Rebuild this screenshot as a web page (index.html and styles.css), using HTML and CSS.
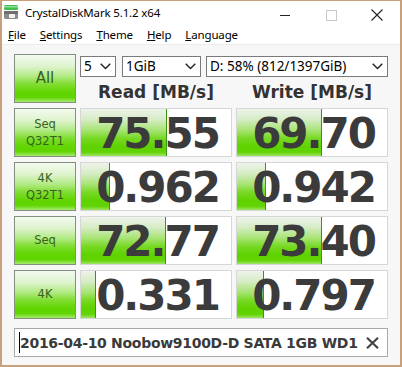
FILE: index.html
```html
<!DOCTYPE html>
<html>
	<head>
		<title>CrystalDiskMark 5.1.2 x64</title>
		<link rel="stylesheet" href="styles.css">
	</head>
	<body>
	<div class="window">
		<div class="titlebar">
			<svg class="appicon" width="16" height="15" viewBox="0 0 16 15">
				<rect x="0" y="0" width="14" height="5" rx="1.5" fill="#3fbf4a"/>
				<rect x="0" y="1" width="14" height="1.5" fill="#8fe09a"/>
				<rect x="0" y="6" width="14" height="8" rx="1.5" fill="#8c8c8c"/>
				<rect x="0" y="6" width="14" height="3" fill="#6f6f6f"/>
				<rect x="5" y="9" width="6" height="4" rx="1" fill="#f2f2f2"/>
			</svg>
			<span class="title">CrystalDiskMark 5.1.2 x64</span>
			<div class="caption">
				<span class="cbtn"><svg width="10" height="10" viewBox="0 0 10 10"><line x1="0" y1="5.5" x2="10" y2="5.5" stroke="#222" stroke-width="1"/></svg></span>
				<span class="cbtn"><svg width="11" height="11" viewBox="0 0 11 11"><rect x="0.5" y="0.5" width="10" height="10" fill="none" stroke="#c8c8c8" stroke-width="1"/></svg></span>
				<span class="cbtn"><svg width="12" height="12" viewBox="0 0 12 12"><path d="M0.5 0.5 L11.5 11.5 M11.5 0.5 L0.5 11.5" stroke="#222" stroke-width="1.1"/></svg></span>
			</div>
		</div>
		<div class="menubar">
			<span><u>F</u>ile</span>
			<span><u>S</u>ettings</span>
			<span><u>T</u>heme</span>
			<span><u>H</u>elp</span>
			<span><u>L</u>anguage</span>
		</div>
		<div class="content">
			<div class="board">
				<div class="btn all">All</div>
				<div class="top">
					<div class="selects">
						<div class="combo c-count"><span>5</span><svg class="chev" width="11" height="7" viewBox="0 0 11 7"><polyline points="0.7,0.7 5.5,5.6 10.3,0.7" fill="none" stroke="#222" stroke-width="1.4"/></svg></div>
						<div class="combo c-size"><span>1GiB</span><svg class="chev" width="11" height="7" viewBox="0 0 11 7"><polyline points="0.7,0.7 5.5,5.6 10.3,0.7" fill="none" stroke="#222" stroke-width="1.4"/></svg></div>
						<div class="combo c-drive"><span>D: 58% (812/1397GiB)</span><svg class="chev" width="11" height="7" viewBox="0 0 11 7"><polyline points="0.7,0.7 5.5,5.6 10.3,0.7" fill="none" stroke="#222" stroke-width="1.4"/></svg></div>
					</div>
					<div class="heads">
						<div>Read [MB/s]</div>
						<div>Write [MB/s]</div>
					</div>
				</div>

				<div class="btn">Seq<br>Q32T1</div>
				<div class="score" style="--w:86px">75.55</div>
				<div class="score" style="--w:85px">69.70</div>

				<div class="btn">4K<br>Q32T1</div>
				<div class="score" style="--w:29px">0.962</div>
				<div class="score" style="--w:29px">0.942</div>

				<div class="btn">Seq</div>
				<div class="score" style="--w:85px">72.77</div>
				<div class="score" style="--w:85px">73.40</div>

				<div class="btn">4K</div>
				<div class="score" style="--w:15px">0.331</div>
				<div class="score" style="--w:27px">0.797</div>
			</div>
			<div class="comment">
				<span class="caret"></span>
				<span class="note">2016-04-10 Noobow9100D-D SATA 1GB WD1</span>
				<svg class="clear" width="13" height="12" viewBox="0 0 13 12"><path d="M1 0.8 L12 11.2 M12 0.8 L1 11.2" stroke="#444" stroke-width="2.2"/></svg>
			</div>
		</div>
	</div>
	</body>
</html>
```

FILE: styles.css
```css
* {
	box-sizing: border-box;
}
body {
	margin: 0;
	background: #fff;
}
.window {
	width: 402px;
	height: 367px;
	border: solid #c9a07c;
	border-width: 1px 2px 2px 2px;
	background: #fff;
	display: flex;
	flex-direction: column;
	font-family: "Noto Sans", sans-serif;
	color: #000;
}
.titlebar {
	height: 28px;
	display: flex;
	align-items: flex-start;
}
.appicon {
	margin: 4px 0 0 2px;
}
.title {
	margin: 4px 0 0 5px;
	font-size: 11.5px;
	letter-spacing: -0.15px;
	line-height: 16px;
}
.caption {
	margin-left: auto;
	display: flex;
}
.cbtn {
	width: 46px;
	height: 28px;
	display: flex;
	align-items: center;
	justify-content: center;
}
.menubar {
	height: 16px;
	display: flex;
	gap: 14px;
	padding-left: 6px;
	font-size: 11.5px;
	letter-spacing: -0.15px;
	line-height: 12px;
	border-bottom: 1px solid #ececec;
}
.menubar u {
	text-underline-offset: 1px;
}
.content {
	flex: 1;
	background: #f7f7f7;
	padding: 9px 12px 8px 12px;
}
.board {
	display: grid;
	grid-template-columns: 62px 152px 152px;
	grid-auto-rows: 49px;
	gap: 5px 4px;
}
.btn {
	border: 1px solid #82907f;
	background: linear-gradient(to bottom, #f4faf0 0%, #dcf3cb 25%, #b2ea85 45%, #80dd32 62%, #63d605 78%, #5fd400 90%, #a6ea6e 100%);
	color: #37621d;
	font-family: "DejaVu Sans", sans-serif;
	font-size: 11.5px;
	line-height: 17px;
	text-align: center;
	display: flex;
	align-items: center;
	justify-content: center;
}
.btn.all {
	font-size: 15px;
}
.top {
	grid-column: span 2;
	display: flex;
	flex-direction: column;
}
.selects {
	display: flex;
	margin-top: 2px;
	height: 21px;
}
.combo {
	border: 1px solid #7a7a7a;
	background: #fff;
	display: flex;
	align-items: center;
	padding: 0 4px 0 3px;
	font-size: 13.5px;
	line-height: 19px;
}
.combo .chev {
	margin-left: auto;
}
.c-count {
	width: 36px;
}
.c-size {
	width: 79px;
	margin-left: 6px;
}
.c-drive {
	width: 182px;
	margin-left: 5px;
}
.heads {
	flex: 1;
	display: grid;
	grid-template-columns: 152px 152px;
	gap: 4px;
	padding-top: 4px;
	font-family: "DejaVu Sans", sans-serif;
	font-weight: bold;
	font-size: 17px;
	line-height: 22px;
	color: #333;
	text-align: center;
}
.score {
	border: 1px solid #d6d6d6;
	background-color: #fff;
	background-image: linear-gradient(to left, #3c9414 1px, transparent 1px), linear-gradient(to bottom, #eef3ea 0%, #d6ecc6 22%, #a8e474 45%, #78d926 62%, #5fd200 80%, #62d304 92%, #9ee564 100%);
	background-size: var(--w) 100%, var(--w) 100%;
	background-repeat: no-repeat;
	font-family: "DejaVu Sans", sans-serif;
	font-weight: bold;
	font-size: 42px;
	letter-spacing: -2px;
	line-height: 44px;
	padding: 3px 12px 0 0;
	text-align: right;
	color: #3b3b3b;
	overflow: hidden;
}
.comment {
	margin-top: 9px;
	height: 29px;
	border: 1px solid #a8a8a8;
	background: #fff;
	display: flex;
	align-items: center;
	padding-left: 4px;
	padding-right: 8px;
}
.caret {
	width: 1px;
	height: 21px;
	background: #000;
}
.note {
	font-family: "DejaVu Sans", sans-serif;
	font-weight: bold;
	font-size: 14px;
	letter-spacing: -0.3px;
	color: #3a3a3a;
	white-space: nowrap;
}
.clear {
	margin-left: auto;
}
```
